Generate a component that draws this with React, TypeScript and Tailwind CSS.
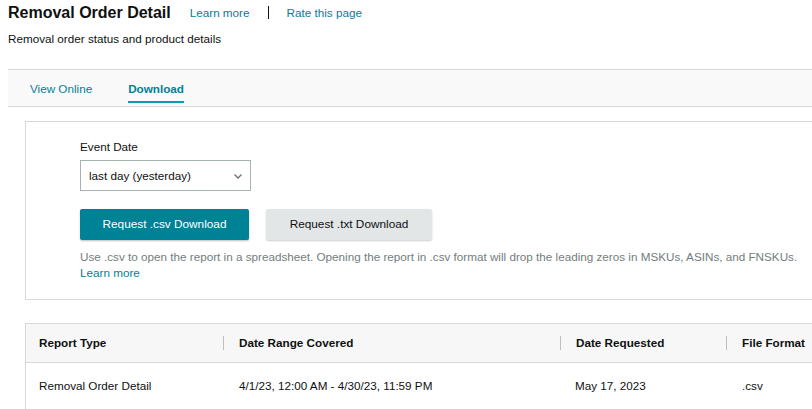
import React from "react";

const font = { fontFamily: '"Liberation Sans", Arial, sans-serif' };

export default function App() {
  return (
    <div className="w-[812px] h-[409px] overflow-hidden bg-white text-[#0f1111]" style={font}>
      <div className="w-[840px]">
        {/* Header */}
        <div className="pl-2 pt-[1px] flex items-center h-[24px]">
          <h1 className="text-[16px] font-bold leading-[24px] text-[#0f1111]">Removal Order Detail</h1>
          <a className="ml-[19px] text-[11.7px] text-[#008296] leading-[24px]">Learn more</a>
          <span className="ml-[18px] w-px h-[13px] bg-[#0f1111]" />
          <a className="ml-[18px] text-[11.7px] text-[#008296] leading-[24px]">Rate this page</a>
        </div>
        <div className="pl-2 mt-[8px] text-[11.7px] leading-[14px]">Removal order status and product details</div>

        {/* Tabs */}
        <div className="ml-2 mt-[23px] h-[38px] border-t border-b border-[#d5d9d9] bg-[#f9f9f9] flex items-stretch pl-[22px]">
          <div className="flex items-center text-[11.7px] text-[#008296] pr-[36px] pt-[1px]">View Online</div>
          <div className="relative flex items-center text-[11.7px] font-bold text-[#008296] pt-[1px]">
            Download
            <span className="absolute left-0 right-0 bottom-[3px] h-[2px] bg-[#0a9eb3]" />
          </div>
        </div>

        {/* Card */}
        <div className="ml-[25px] mt-[14px] h-[179px] border border-[#d5d9d9] pl-[54px] pt-[17px]">
          <div className="text-[11.7px] leading-[16px]">Event Date</div>
          <div className="mt-[5px] w-[171px] h-[31px] border border-[#a6b2b3] flex items-center justify-between pl-[8px] pr-[6px]">
            <span className="text-[11.7px]">last day (yesterday)</span>
            <svg width="12" height="12" viewBox="0 0 12 12" fill="none">
              <path d="M2.5 4.5 L6 8 L9.5 4.5" stroke="#6b7777" strokeWidth="1.4" />
            </svg>
          </div>
          <div className="mt-[18px] flex gap-[17px]">
            <button className="w-[169px] h-[31px] bg-[#008296] text-white text-[11.8px] rounded-[2px] shadow-[0_1px_2px_rgba(0,0,0,0.25)]">
              Request .csv Download
            </button>
            <button className="w-[166px] h-[31px] bg-[#e3e6e6] text-[#0f1111] text-[11.8px] rounded-[2px] shadow-[0_1px_2px_rgba(0,0,0,0.2)]">
              Request .txt Download
            </button>
          </div>
          <div className="mt-[9px] text-[11.7px] leading-[16px] text-[#737d7d] whitespace-nowrap">
            Use .csv to open the report in a spreadsheet. Opening the report in .csv format will drop the leading zeros in MSKUs, ASINs, and FNSKUs.
          </div>
          <a className="block text-[11.7px] leading-[16px] text-[#008296]">Learn more</a>
        </div>

        {/* Table */}
        <div className="ml-[25px] mt-[23px] border-t border-l border-[#d5d9d9]">
          <div className="h-[39px] bg-[#f7f7f7] border-b border-[#d5d9d9] flex items-center text-[11.7px] font-bold">
            <div className="w-[197px] pl-[13px]">Report Type</div>
            <div className="w-px h-[14px] bg-[#b9c2c2]" />
            <div className="w-[336px] pl-[15px]">Date Range Covered</div>
            <div className="w-px h-[14px] bg-[#b9c2c2]" />
            <div className="w-[165px] pl-[15px]">Date Requested</div>
            <div className="w-px h-[14px] bg-[#b9c2c2]" />
            <div className="pl-[15px]">File Format</div>
          </div>
          <div className="h-[46px] flex items-center text-[11.7px]">
            <div className="w-[198px] pl-[13px]">Removal Order Detail</div>
            <div className="w-[337px] pl-[15px]">4/1/23, 12:00 AM - 4/30/23, 11:59 PM</div>
            <div className="w-[166px] pl-[14px]">May 17, 2023</div>
            <div className="pl-[15px]">.csv</div>
          </div>
        </div>
      </div>
    </div>
  );
}
